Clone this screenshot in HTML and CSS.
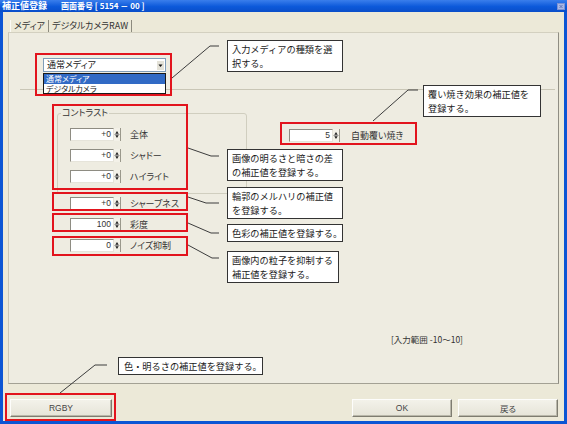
FILE: index.html
```html
<!DOCTYPE html>
<html lang="ja">
<head>
<meta charset="utf-8">
<title>補正値登録</title>
<link rel="stylesheet" href="styles.css">
</head>
<body>
<div class="window">
  <div class="titlebar">
    <span class="title-main">補正値登録</span>
    <span class="title-sub">画面番号 [ 5154 － 00 ]</span>
    <span class="close-btn"><svg width="8" height="7" viewBox="0 0 8 7"><rect x="0.5" y="0.5" width="7" height="6" fill="#A9B8E6" stroke="#7D92D3"/><path d="M2.5 2l3 3M5.5 2l-3 3" stroke="#6275B8" stroke-width="1"/></svg></span>
  </div>
  <div class="client">
    <div class="tabs">
      <div class="tab active">メディア</div>
      <div class="tab">デジタルカメラRAW</div>
    </div>
    <div class="panel">
      <div class="media-row">
        <div class="combo">
          <span class="combo-text">通常メディア</span>
          <span class="combo-btn"><svg width="7" height="9" viewBox="0 0 7 9"><rect x="0" y="0" width="7" height="9" fill="#E4E2D8"/><path d="M1.5 3.5h4L3.5 6z" fill="#111"/></svg></span>
        </div>
        <ul class="combo-list">
          <li class="sel">通常メディア</li>
          <li>デジタルカメラ</li>
        </ul>
      </div>
      <div class="sep"></div>
      <div class="main">
        <div class="left-col">
          <fieldset class="group">
            <legend>コントラスト</legend>
            <div class="group-body">
              <div class="row"><span class="num">+0</span><span class="spin"><svg width="7" height="13" viewBox="0 0 7 13"><path d="M1.5 5.5h4L3.5 2.5z M1.5 7.5h4L3.5 10.5z" fill="#222"/><path d="M0.5 6.5h6" stroke="#8a8a8a"/></svg></span><span class="lbl">全体</span></div>
              <div class="row"><span class="num">+0</span><span class="spin"><svg width="7" height="13" viewBox="0 0 7 13"><path d="M1.5 5.5h4L3.5 2.5z M1.5 7.5h4L3.5 10.5z" fill="#222"/><path d="M0.5 6.5h6" stroke="#8a8a8a"/></svg></span><span class="lbl">シャドー</span></div>
              <div class="row"><span class="num">+0</span><span class="spin"><svg width="7" height="13" viewBox="0 0 7 13"><path d="M1.5 5.5h4L3.5 2.5z M1.5 7.5h4L3.5 10.5z" fill="#222"/><path d="M0.5 6.5h6" stroke="#8a8a8a"/></svg></span><span class="lbl">ハイライト</span></div>
            </div>
          </fieldset>
          <div class="rows">
            <div class="row"><span class="num">+0</span><span class="spin"><svg width="7" height="13" viewBox="0 0 7 13"><path d="M1.5 5.5h4L3.5 2.5z M1.5 7.5h4L3.5 10.5z" fill="#222"/><path d="M0.5 6.5h6" stroke="#8a8a8a"/></svg></span><span class="lbl">シャープネス</span></div>
            <div class="row"><span class="num">100</span><span class="spin"><svg width="7" height="13" viewBox="0 0 7 13"><path d="M1.5 5.5h4L3.5 2.5z M1.5 7.5h4L3.5 10.5z" fill="#222"/><path d="M0.5 6.5h6" stroke="#8a8a8a"/></svg></span><span class="lbl">彩度</span></div>
            <div class="row"><span class="num">0</span><span class="spin"><svg width="7" height="13" viewBox="0 0 7 13"><path d="M1.5 5.5h4L3.5 2.5z M1.5 7.5h4L3.5 10.5z" fill="#222"/><path d="M0.5 6.5h6" stroke="#8a8a8a"/></svg></span><span class="lbl">ノイズ抑制</span></div>
          </div>
        </div>
        <div class="right-col">
          <div class="row"><span class="num">5</span><span class="spin"><svg width="7" height="13" viewBox="0 0 7 13"><path d="M1.5 5.5h4L3.5 2.5z M1.5 7.5h4L3.5 10.5z" fill="#222"/><path d="M0.5 6.5h6" stroke="#8a8a8a"/></svg></span><span class="lbl lbl-wide">自動覆い焼き</span></div>
        </div>
      </div>
      <div class="range">[入力範囲 -10～10]</div>
    </div>
    <div class="buttons">
      <button class="btn btn-rgby">RGBY</button>
      <div class="btn-group">
        <button class="btn">OK</button>
        <button class="btn">戻る</button>
      </div>
    </div>
  </div>

  <div class="annot">
    <svg class="leaders" width="567" height="424" viewBox="0 0 567 424">
      <g fill="none" stroke="#3c3c3c" stroke-width="1">
        <polyline points="172,78 210,46 219,46"/>
        <polyline points="373,121 408,90 418,90"/>
        <polyline points="188,148 211,156 219,156"/>
        <polyline points="188,197 206,203 219,203"/>
        <polyline points="188,223 211,233 219,233"/>
        <polyline points="188,245 212,258 219,258"/>
        <polyline points="60,393 95,365 107,365"/>
      </g>
    </svg>
    <div class="hl hl-combo"></div>
    <div class="hl hl-contrast"></div>
    <div class="hl hl-sharp"></div>
    <div class="hl hl-sat"></div>
    <div class="hl hl-noise"></div>
    <div class="hl hl-auto"></div>
    <div class="hl hl-rgby"></div>

    <div class="note note-media">入力メディアの種類を選<br>択する。</div>
    <div class="note note-dodge">覆い焼き効果の補正値を<br>登録する。</div>
    <div class="note note-contrast">画像の明るさと暗さの差<br>の補正値を登録する。</div>
    <div class="note note-sharp">輪郭のメルハリの補正値<br>を登録する。</div>
    <div class="note note-sat">色彩の補正値を登録する。</div>
    <div class="note note-noise">画像内の粒子を抑制する<br>補正値を登録する。</div>
    <div class="note note-rgby">色・明るさの補正値を登録する。</div>
  </div>
</div>
</body>
</html>
```
FILE: styles.css
```css
* { box-sizing: border-box; margin: 0; padding: 0; }
html, body { width: 567px; height: 424px; overflow: hidden; }
body {
  background: #ECE9D8;
  font-family: "Noto Sans CJK JP", "Noto Sans", sans-serif;
  font-size: 9px;
  color: #222;
}
.window {
  position: relative;
  width: 567px;
  height: 424px;
  display: flex;
  flex-direction: column;
  background: #ECE9D8;
}
/* title bar */
.titlebar {
  height: 12px;
  flex: none;
  display: flex;
  align-items: center;
  padding-left: 2px;
  background: linear-gradient(#3A7EEC, #0C59DA 55%, #0A4EC9);
  color: #fff;
  font-weight: bold;
  line-height: 12px;
  white-space: nowrap;
}
.title-main { font-size: 9px; }
.title-sub { font-size: 8px; margin-left: 14px; font-feature-settings: "palt"; }
.close-btn { margin-left: auto; margin-right: 2px; display: flex; }

/* client */
.client {
  flex: 1;
  display: flex;
  flex-direction: column;
  border: 3px solid #0C55D4;
  border-top: 0;
  padding: 8px 5px 4px;
}
.tabs {
  height: 12px;
  display: flex;
  padding-left: 2px;
  font-feature-settings: "palt";
}
.tab {
  height: 12px;
  line-height: 12px;
  padding: 0 3px;
  border-right: 1px solid #8C8A7E;
  color: #333;
  font-size: 9px;
}
.tab.active { border-left: 1px solid #FBFAF5; }

.panel {
  height: 352px;
  flex: none;
  display: flex;
  flex-direction: column;
  border: 1px solid;
  border-color: #D3D0C0 #8F8D83 #A3A194 #C9C6B6;
  background: #EEECE1;
  font-feature-settings: "palt";
}
.media-row {
  position: relative;
  margin: 25px 0 0 34px;
  width: 123px;
}
.combo {
  height: 14px;
  display: flex;
  align-items: center;
  background: #fff;
  border: 1px solid #7F9DB9;
  font-size: 9px;
}
.combo-text { padding-left: 3px; line-height: 12px; }
.combo-btn { margin-left: auto; margin-right: 1px; display: flex; }
.combo-list {
  position: absolute;
  top: 15px;
  left: 0;
  width: 123px;
  height: 21px;
  list-style: none;
  background: #fff;
  border: 1px solid #1a1a1a;
  z-index: 2;
  overflow: hidden;
}
.combo-list li { height: 9.5px; line-height: 9.5px; padding-left: 2px; font-size: 8px; overflow: hidden; }
.combo-list li.sel { background: #316AC5; color: #fff; }
.sep {
  height: 1px;
  margin: 17px 3px 0 11px;
  background: #C9C6B6;
}
.main {
  display: flex;
  margin-top: 18px;
}
.left-col { margin-left: 48px; width: 190px; }
.group {
  width: 190px;
  border: 1px solid #D0CEBF;
  border-radius: 3px;
  padding: 0;
}
.group legend {
  margin-left: 3px;
  padding: 0 1px;
  font-size: 9px;
  line-height: 10px;
  color: #333;
}
.group-body {
  display: flex;
  flex-direction: column;
  gap: 8px;
  padding: 10px 0 10px 12px;
}
.rows {
  display: flex;
  flex-direction: column;
  gap: 8px;
  margin-top: 3px;
  padding-left: 13px;
}
.row {
  display: flex;
  align-items: center;
  height: 13px;
}
.num {
  width: 44px;
  height: 13px;
  background: #fff;
  border: 1px solid;
  border-color: #8E8C82 #E6E4DA #E6E4DA #8E8C82;
  text-align: right;
  padding-right: 2px;
  font-family: "Liberation Sans", "Noto Sans CJK JP", sans-serif;
  font-size: 8.5px;
  line-height: 11px;
  color: #333;
}
.spin {
  width: 7px;
  height: 13px;
  display: flex;
  background: #F3F1E8;
  border-right: 1px solid #9a988c;
}
.lbl { margin-left: 9px; font-size: 9px; color: #333; white-space: nowrap; }
.lbl-wide { margin-left: 11px; }
.right-col { margin-left: 42px; margin-top: 21px; }
.range {
  margin: auto 0 38px 382px;
  font-size: 8.5px;
  line-height: 11px;
  color: #333;
  white-space: nowrap;
}

/* buttons */
.buttons {
  display: flex;
  justify-content: space-between;
  margin-top: 15px;
  height: 18px;
  padding: 0 1px 0 2px;
}
.btn-group { display: flex; gap: 6px; }
.btn {
  width: 100px;
  height: 18px;
  background: linear-gradient(#F3F2EA, #E6E4D8);
  border: 1px solid;
  border-color: #FDFDFB #7E7C70 #7E7C70 #FDFDFB;
  box-shadow: inset -1px -1px 0 #B9B7AA;
  font-family: "Liberation Sans", "Noto Sans CJK JP", sans-serif;
  font-size: 8.5px;
  color: #444;
  font-feature-settings: "palt";
}
.btn-rgby { width: 102px; }

/* annotation layer */
.annot { position: absolute; left: 0; top: 0; width: 567px; height: 424px; pointer-events: none; }
.leaders { position: absolute; left: 0; top: 0; }
.hl { position: absolute; border: 2px solid #E2141D; }
.hl-combo { left: 35px; top: 53px; width: 137px; height: 43px; }
.hl-contrast { left: 52px; top: 104px; width: 136px; height: 86px; }
.hl-sharp { left: 52px; top: 192px; width: 136px; height: 19px; }
.hl-sat { left: 52px; top: 213px; width: 136px; height: 19px; }
.hl-noise { left: 52px; top: 236px; width: 136px; height: 20px; }
.hl-auto { left: 280px; top: 122px; width: 137px; height: 23px; }
.hl-rgby { left: 5px; top: 393px; width: 111px; height: 28px; }

.note {
  position: absolute;
  background: #fff;
  border: 1px solid #333;
  padding: 1px 2px 1px 4px;
  font-size: 9.2px;
  line-height: 14px;
  color: #1a1a1a;
  white-space: nowrap;
}
.note-media { left: 227px; top: 40px; width: 116px; }
.note-dodge { left: 423px; top: 85px; width: 118px; }
.note-contrast { left: 227px; top: 149px; width: 116px; }
.note-sharp { left: 227px; top: 187px; width: 116px; }
.note-sat { left: 227px; top: 224px; width: 116px; }
.note-noise { left: 227px; top: 251px; width: 112px; }
.note-rgby { left: 118px; top: 357px; width: 145px; padding-left: 5px; }
```
